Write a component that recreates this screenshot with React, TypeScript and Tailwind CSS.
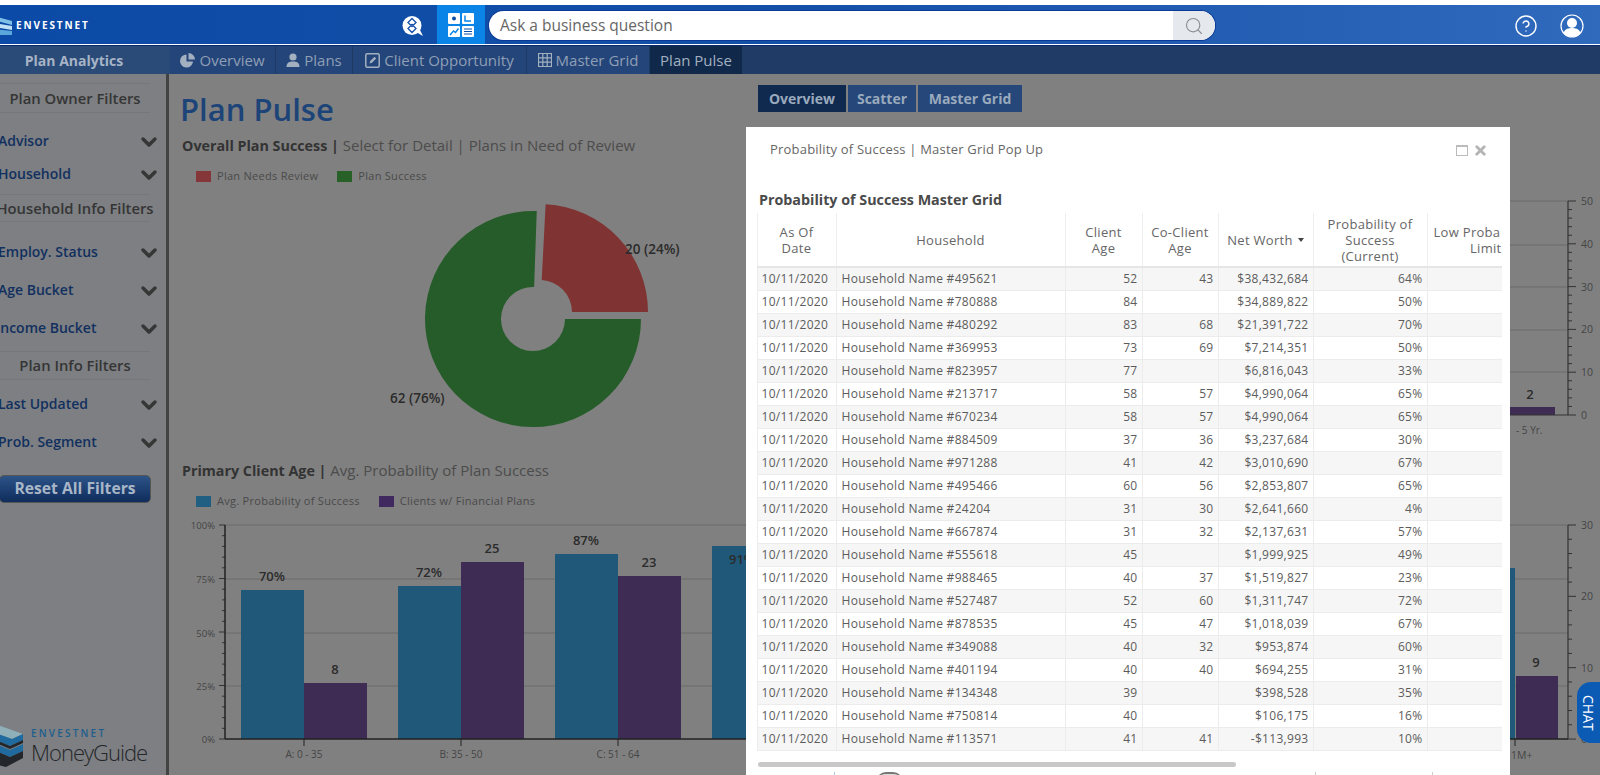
import { ChevronDown, CircleHelp, Search, X } from "lucide-react";

const rows = [
  ["495621", "52", "43", "$38,432,684", "64%"],
  ["780888", "84", "", "$34,889,822", "50%"],
  ["480292", "83", "68", "$21,391,722", "70%"],
  ["369953", "73", "69", "$7,214,351", "50%"],
  ["823957", "77", "", "$6,816,043", "33%"],
  ["213717", "58", "57", "$4,990,064", "65%"],
  ["670234", "58", "57", "$4,990,064", "65%"],
  ["884509", "37", "36", "$3,237,684", "30%"],
  ["971288", "41", "42", "$3,010,690", "67%"],
  ["495466", "60", "56", "$2,853,807", "65%"],
  ["24204", "31", "30", "$2,641,660", "4%"],
  ["667874", "31", "32", "$2,137,631", "57%"],
  ["555618", "45", "", "$1,999,925", "49%"],
  ["988465", "40", "37", "$1,519,827", "23%"],
  ["527487", "52", "60", "$1,311,747", "72%"],
  ["878535", "45", "47", "$1,018,039", "67%"],
  ["349088", "40", "32", "$953,874", "60%"],
  ["401194", "40", "40", "$694,255", "31%"],
  ["134348", "39", "", "$398,528", "35%"],
  ["750814", "40", "", "$106,175", "16%"],
  ["113571", "41", "41", "-$113,993", "10%"],
];

const gridCols = "grid grid-cols-[80px_229px_77px_76px_95px_114px_74px]";

function polar(cx: number, cy: number, r: number, deg: number) {
  const a = ((deg - 90) * Math.PI) / 180;
  return `${cx + r * Math.cos(a)} ${cy + r * Math.sin(a)}`;
}

function slice(cx: number, cy: number, r0: number, r1: number, from: number, to: number) {
  const large = to - from > 180 ? 1 : 0;
  return `M${polar(cx, cy, r1, from)} A${r1} ${r1} 0 ${large} 1 ${polar(cx, cy, r1, to)} L${polar(cx, cy, r0, to)} A${r0} ${r0} 0 ${large} 0 ${polar(cx, cy, r0, from)} Z`;
}

function FilterHeading({ label, h }: { label: string; h: string }) {
  return (
    <div className={`${h} mr-[16px] flex items-center justify-center whitespace-nowrap border-y border-[#75777a] text-[14.8px] font-semibold text-[#353535]`}>
      {label}
    </div>
  );
}

function FilterRow({ label, h, inset }: { label: string; h: string; inset: string }) {
  return (
    <div className={`${h} flex items-center justify-between pr-[5px] text-[14px] font-semibold text-[#12305f]`}>
      <span className={inset}>{label}</span>
      <ChevronDown size={24} strokeWidth={3.5} className="mt-[3px] text-[#363636]" />
    </div>
  );
}

function Legend({ items }: { items: [string, string][] }) {
  return (
    <div className="flex gap-[19px] pl-[27px] text-[11px] tracking-[0.28px] text-[#4a4a4a]">
      {items.map(([label, color]) => (
        <div key={label} className="flex items-center gap-[6px]">
          <span className="h-[11px] w-[15px]" style={{ background: color }} />
          {label}
        </div>
      ))}
    </div>
  );
}

function SectionTitle({ bold, rest, mt }: { bold: string; rest: string; mt: string }) {
  return (
    <p className={`${mt} h-[20px] pl-[13px] text-[15px] leading-[20px] text-[#4c4c4c]`}>
      <span className="text-[14.3px] font-bold text-[#333]">{bold}</span> {rest}
    </p>
  );
}

function NavTab({ label, icon, active, w }: { label: string; icon?: React.ReactNode; active?: boolean; w: string }) {
  return (
    <div className={`${w} flex items-center justify-center gap-[4px] border-r border-[#1d3a63] text-[15px] ${active ? "bg-[#10294b] text-[#a3b0c0]" : "bg-[#24457a] text-[#8f9fb4]"}`}>
      {icon}
      {label}
    </div>
  );
}

function AgeChart() {
  const ticks = Array.from({ length: 21 }, (_, i) => 525 + i * 10.7);
  const groups = [
    { x: 241, a: 590, b: 683, al: "70%", bl: "8", name: "A: 0 - 35" },
    { x: 398, a: 586, b: 562, al: "72%", bl: "25", name: "B: 35 - 50" },
    { x: 555, a: 554, b: 576, al: "87%", bl: "23", name: "C: 51 - 64" },
  ];
  return (
    <svg viewBox="169 510 589 265" width={589} height={265} className="block">
      {[525, 579, 633, 686].map((y) => (
        <line key={y} x1={225} x2={758} y1={y} y2={y} stroke="#6a6a6a" />
      ))}
      {ticks.map((y, i) => (
        <line key={y} x1={i % 5 === 0 ? 219 : 222} x2={225} y1={y} y2={y} stroke="#333" />
      ))}
      <line x1={225} x2={225} y1={525} y2={739} stroke="#222" strokeWidth={1.5} />
      {[
        ["100%", 529],
        ["75%", 583],
        ["50%", 637],
        ["25%", 690],
        ["0%", 743],
      ].map(([t, y]) => (
        <text key={t} x={215} y={y} textAnchor="end" fontSize={9.5} fill="#454545">{t}</text>
      ))}
      {groups.map((g) => (
        <g key={g.name}>
          <rect x={g.x} y={g.a} width={63} height={739 - g.a} fill="#1f5878" />
          <rect x={g.x + 63} y={g.b} width={63} height={739 - g.b} fill="#3f2c54" />
          <text x={g.x + 31} y={g.a - 9} textAnchor="middle" fontSize={13} fontWeight={600} fill="#2b2b2b">{g.al}</text>
          <text x={g.x + 94} y={g.b - 9} textAnchor="middle" fontSize={13} fontWeight={600} fill="#2b2b2b">{g.bl}</text>
          <line x1={g.x + 63} x2={g.x + 63} y1={739} y2={746} stroke="#222" />
          <text x={g.x + 63} y={758} textAnchor="middle" fontSize={10} fill="#454545">{g.name}</text>
        </g>
      ))}
      <rect x={712} y={546} width={46} height={193} fill="#1f5878" />
      <text x={729} y={564} fontSize={13} fontWeight={600} fill="#2b2b2b">91%</text>
      <line x1={225} x2={758} y1={739} y2={739} stroke="#222" strokeWidth={1.5} />
    </svg>
  );
}

function RightAxis({ vals, top, step, minor }: { vals: number[]; top: number; step: number; minor: number }) {
  const n = (vals.length - 1) * 5;
  return (
    <g>
      <line x1={1568} x2={1568} y1={top} y2={top + step * (vals.length - 1)} stroke="#333" strokeWidth={1.2} />
      {Array.from({ length: n + 1 }, (_, i) => (
        <line key={i} x1={1568} x2={i % 5 === 0 ? 1576 : 1572} y1={top + i * minor} y2={top + i * minor} stroke="#333" />
      ))}
      {vals.map((v, i) => (
        <text key={v} x={1581} y={top + i * step + 4} fontSize={10.5} fill="#454545">{v}</text>
      ))}
    </g>
  );
}

function ModalPopup() {
  return (
    <div className="absolute left-[746px] top-[127px] h-[660px] w-[764px] bg-white">
      <div className="flex h-[44px] items-center justify-between pl-[24px] pr-[22px] pt-[2px] text-[13px] tracking-[0.2px] text-[#666]">
        Probability of Success | Master Grid Pop Up
        <div className="flex items-center gap-[5px]">
          <span className="h-[11px] w-[12px] border border-t-2 border-[#bbb]" />
          <X size={15} strokeWidth={4.5} className="text-[#b4b4b4]" />
        </div>
      </div>
      <div className="mt-[19px] pl-[13px] text-[14.3px] font-bold leading-[20px] text-[#4a4a4a]">Probability of Success Master Grid</div>
      <div className="ml-[10.5px] mt-[3px] w-[745px] overflow-hidden text-[12px] tracking-[0.3px] text-[#5c5c5c]">
        <div className={`${gridCols} h-[55px] border-b-2 border-[#e6e6e6] text-center text-[13px] leading-[16px] text-[#666]`}>
          <div className="flex items-center justify-center border-x border-[#eee] px-[14px]">As Of Date</div>
          <div className="flex items-center justify-center border-r border-[#eee]">Household</div>
          <div className="flex items-center justify-center border-r border-[#eee] px-[12px]">Client Age</div>
          <div className="flex items-center justify-center border-r border-[#eee]">Co-Client Age</div>
          <div className="flex items-center justify-center gap-[5px] whitespace-nowrap border-r border-[#eee]">
            Net Worth
            <span className="border-x-[3px] border-t-[4px] border-x-transparent border-t-[#444]" />
          </div>
          <div className="flex items-center justify-center border-r border-[#eee] px-[4px]">Probability of Success (Current)</div>
          <div className="overflow-hidden whitespace-nowrap pl-[6px] pt-[11px]">
            <div className="w-[100px] text-left">Low Proba</div>
            <div className="w-[68px] text-right">Limit</div>
          </div>
        </div>
        {rows.map((r, i) => (
          <div key={r[0]} className={`${gridCols} h-[23px] items-stretch border-b border-[#ececec] leading-[22px] ${i % 2 === 0 ? "bg-[#f6f6f6]" : "bg-white"}`}>
            <div className="border-x border-[#ececec] pl-[4px]">10/11/2020</div>
            <div className="border-r border-[#ececec] pl-[5px]">Household Name #{r[0]}</div>
            <div className="border-r border-[#ececec] pr-[4px] text-right">{r[1]}</div>
            <div className="border-r border-[#ececec] pr-[4px] text-right">{r[2]}</div>
            <div className="border-r border-[#ececec] pr-[4px] text-right">{r[3]}</div>
            <div className="border-r border-[#ececec] pr-[4px] text-right">{r[4]}</div>
            <div />
          </div>
        ))}
      </div>
      <div className="ml-[12px] mt-[11px] h-[5px] w-[478px] rounded-full bg-[#c8c8c8]" />
      <div className="mt-[5px] flex items-start">
        <span className="ml-[88px] h-[4px] w-[1px] bg-[#a9cbe4]" />
        <span className="ml-[41px] h-[10px] w-[27px] rounded-t-full border-t-2 border-[#777] bg-[#ddd]" />
        <span className="ml-[412px] h-[4px] w-[1px] bg-[#ccc]" />
        <span className="ml-[116px] h-[4px] w-[1px] bg-[#ccc]" />
      </div>
    </div>
  );
}

export default function App() {
  const cx = 533;
  const cy = 319;
  return (
    <div className="relative h-[775px] w-[1600px] overflow-hidden bg-[#808080] font-['Open_Sans',sans-serif]">
      <div className="h-[5px] bg-white" />

      <header className="flex h-[39px] items-center bg-gradient-to-r from-[#0b4aa6] via-[#1450a8] to-[#306abd] text-white">
        <div className="mt-[2px] flex w-[402px] items-center gap-[1px]">
          <svg width={15} height={24} viewBox="0 0 15 24" className="shrink-0">
            <path d="M-6 2 L12 7 V11 L-6 6 Z" fill="#7fc0e8" />
            <path d="M-6 9 L12 12 V16 L-6 13 Z" fill="#bfe0f5" />
            <path d="M-6 15 L12 17 V21 L-6 21 Z" fill="#5aa7dc" />
          </svg>
          <span className="text-[10px] font-bold tracking-[1.9px]">ENVESTNET</span>
        </div>
        <svg width={21} height={20} viewBox="0 0 21 20" className="mt-[2px] shrink-0">
          <circle cx={10} cy={9.5} r={9.5} fill="white" />
          <path d="M14 16 L21 20 L17 12 Z" fill="white" />
          <path d="M10 2.5 L14 6.5 L10 10.5 L6 6.5 Z M10 8.5 L14 12.5 L10 16.5 L6 12.5 Z" fill="none" stroke="#1450a8" strokeWidth={1.3} />
        </svg>
        <div className="ml-[14px] flex h-full w-[48px] shrink-0 items-center justify-center bg-[#0a84e6]">
          <svg width={26} height={24} viewBox="0 0 26 24">
            <rect width={12} height={11} rx={1} fill="white" />
            <rect x={14} width={12} height={11} rx={1} fill="white" />
            <rect y={13} width={12} height={11} rx={1} fill="white" />
            <rect x={14} y={13} width={12} height={11} rx={1} fill="white" />
            <circle cx={6} cy={5.5} r={2} fill="#0a4fa6" />
            <path d="M17 2.5 V8 H23" fill="none" stroke="#0a84e6" strokeWidth={1.5} />
            <path d="M2 22 L5.5 18 L7.5 19.5 L10.5 15.5" fill="none" stroke="#0a84e6" strokeWidth={1.4} />
            <path d="M16 16 H24 M16 18.5 H24 M16 21 H24" stroke="#0a4fa6" strokeWidth={1.2} />
          </svg>
        </div>
        <div className="ml-[4px] mt-[2px] flex h-[29px] w-[726px] shrink-0 items-center overflow-hidden rounded-full bg-white shadow-[0_0_0_1px_#0a3a96]">
          <span className="flex-1 pl-[11px] text-[15.5px] text-[#666]">Ask a business question</span>
          <div className="flex h-full w-[42px] items-center justify-center bg-[#e5e8ec]">
            <Search size={20} strokeWidth={1.4} className="text-[#8a8f96]" />
          </div>
        </div>
        <div className="ml-auto mt-[2px] flex items-center gap-[22px] pr-[16px]">
          <CircleHelp size={24} strokeWidth={1.4} />
          <svg width={24} height={24} viewBox="0 0 24 24">
            <circle cx={12} cy={12} r={11} fill="none" stroke="white" strokeWidth={1.2} />
            <circle cx={12} cy={9} r={5} fill="white" />
            <path d="M3.5 19 C5 14.5 9 14 12 14 C15 14 19 14.5 20.5 19 C18 22 15 23 12 23 C9 23 6 22 3.5 19 Z" fill="white" />
          </svg>
        </div>
      </header>

      <div className="h-[1px] bg-white" />
      <div className="h-[1px] bg-[#0a2a70]" />

      <nav className="flex h-[28px] bg-[#203c66]">
        <div className="flex w-[170px] items-center justify-center bg-[#2a4a78] pr-[22px] text-[14px] font-bold text-[#a6b4c6]">Plan Analytics</div>
        <NavTab
          w="w-[106px]"
          label="Overview"
          icon={
            <svg width={15} height={15} viewBox="0 0 15 15">
              <path d="M6.5 1.5 A6.5 6.5 0 1 0 13 8.5 H6.5 Z" fill="#a3b0c0" />
              <path d="M8.5 0 A6.5 6.5 0 0 1 15 6.5 H8.5 Z" fill="#a3b0c0" />
            </svg>
          }
        />
        <NavTab
          w="w-[77px]"
          label="Plans"
          icon={
            <svg width={14} height={14} viewBox="0 0 14 14">
              <circle cx={7} cy={4} r={3.6} fill="#a3b0c0" />
              <path d="M0.5 14 C0.5 9.5 3.5 8.5 7 8.5 C10.5 8.5 13.5 9.5 13.5 14 Z" fill="#a3b0c0" />
            </svg>
          }
        />
        <NavTab
          w="w-[174px]"
          label="Client Opportunity"
          icon={
            <svg width={15} height={15} viewBox="0 0 15 15">
              <rect x={0.8} y={0.8} width={13.4} height={13.4} rx={1.5} fill="none" stroke="#a3b0c0" strokeWidth={1.5} />
              <path d="M4.5 10.5 L5.2 8 L9.5 3.8 L11.2 5.5 L7 9.8 Z" fill="#a3b0c0" />
            </svg>
          }
        />
        <NavTab
          w="w-[123px]"
          label="Master Grid"
          icon={
            <svg width={14} height={14} viewBox="0 0 14 14">
              <path d="M0.5 0.5 H13.5 V13.5 H0.5 Z M0.5 4.8 H13.5 M0.5 9.2 H13.5 M4.8 0.5 V13.5 M9.2 0.5 V13.5" fill="none" stroke="#a3b0c0" strokeWidth={1.2} />
            </svg>
          }
        />
        <NavTab w="w-[93px]" label="Plan Pulse" active />
      </nav>

      <main className="flex h-[701px]">
        <aside className="flex w-[169px] shrink-0 flex-col overflow-hidden border-r-[3px] border-[#434343] bg-[#7d7f82] pt-[9px]">
          <FilterHeading label="Plan Owner Filters" h="h-[30px]" />
          <div className="h-[11px]" />
          <FilterRow label="Advisor" h="h-[33px]" inset="-ml-[2px]" />
          <FilterRow label="Household" h="h-[33px]" inset="-ml-[2px]" />
          <div className="h-[4px]" />
          <FilterHeading label="Household Info Filters" h="h-[28px]" />
          <div className="h-[10px]" />
          <FilterRow label="Employ. Status" h="h-[38px]" inset="-ml-[2px]" />
          <FilterRow label="Age Bucket" h="h-[38px]" inset="-ml-[2px]" />
          <FilterRow label="Income Bucket" h="h-[38px]" inset="-ml-[4px]" />
          <div className="h-[5px]" />
          <FilterHeading label="Plan Info Filters" h="h-[29px]" />
          <div className="h-[4px]" />
          <FilterRow label="Last Updated" h="h-[38px]" inset="-ml-[2px]" />
          <FilterRow label="Prob. Segment" h="h-[38px]" inset="-ml-[2px]" />
          <div className="-ml-[1px] mr-[15px] mt-[15px] flex h-[28px] items-center justify-center rounded-[5px] border border-[#555] bg-gradient-to-b from-[#2d5488] to-[#0f2c5c] text-[15.7px] font-bold text-[#a8b6c8]">
            Reset All Filters
          </div>
          <div className="mt-auto flex items-center gap-[8px] pb-[8px]">
            <svg width={23} height={42} viewBox="0 0 23 42" className="shrink-0">
              <path d="M-2 0 L23 9 L12 14 L-2 9 Z" fill="#8fb0b8" />
              <path d="M-2 9 L12 14 L23 9 V15 L10 21 L-2 16 Z" fill="#1f6a9e" />
              <path d="M-2 16 L10 21 L23 15 V18 L10 24 L-2 19 Z" fill="#23262b" />
              <path d="M-2 20 L10 25 L23 19 V26 L10 32 L-2 27 Z" fill="#1f6a9e" />
              <path d="M-2 27 L10 32 L23 26 V33 L6 42 L-2 40 Z" fill="#23262b" />
            </svg>
            <div>
              <div className="text-[10px] font-semibold leading-[11px] tracking-[2.2px] text-[#1c5e8e]">ENVESTNET</div>
              <div className="text-[22px] font-light leading-[26px] tracking-[-1px] text-[#24262a]">MoneyGuide</div>
            </div>
          </div>
        </aside>

        <section className="w-[589px] shrink-0 overflow-hidden">
          <h1 className="h-[55px] pl-[11px] pt-[15px] text-[31px] font-semibold leading-[40px] text-[#1c4478]">Plan Pulse</h1>
          <SectionTitle mt="mt-[6px]" bold="Overall Plan Success |" rest="Select for Detail | Plans in Need of Review" />
          <div className="mt-[13px] h-[12px]">
            <Legend items={[["Plan Needs Review", "#843638"], ["Plan Success", "#276128"]]} />
          </div>
          <svg viewBox="169 190 589 263" width={589} height={263} className="mt-[10px] block">
            <path d={slice(cx, cy, 32, 108, 90, 362)} fill="#265c29" />
            <path d={slice(cx + 7, cy - 7, 32, 108, 3, 90)} fill="#7f3333" />
            <text x={625} y={254} fontSize={13.5} fontWeight={600} fill="#2b2b2b">20 (24%)</text>
            <text x={390} y={403} fontSize={13.5} fontWeight={600} fill="#2b2b2b">62 (76%)</text>
          </svg>
          <SectionTitle mt="mt-[7px]" bold="Primary Client Age |" rest="Avg. Probability of Plan Success" />
          <div className="mt-[13px] h-[12px]">
            <Legend items={[["Avg. Probability of Success", "#215f82"], ["Clients w/ Financial Plans", "#40295f"]]} />
          </div>
          <div className="mt-[5px]">
            <AgeChart />
          </div>
        </section>

        <section className="w-[842px] shrink-0">
          <div className="flex gap-[2px] pt-[11px] text-[14px] font-bold text-[#9aaabd]">
            <div className="flex h-[27px] w-[88px] items-center justify-center bg-[#10294f]">Overview</div>
            <div className="flex h-[27px] w-[68px] items-center justify-center bg-[#25477a]">Scatter</div>
            <div className="flex h-[27px] w-[104px] items-center justify-center bg-[#25477a]">Master Grid</div>
          </div>
          <svg viewBox="758 190 842 250" width={842} height={250} className="mt-[78px] block">
            {[201, 245, 287, 330, 372].map((y) => (
              <line key={y} x1={1510} x2={1568} y1={y} y2={y} stroke="#6a6a6a" />
            ))}
            <RightAxis vals={[50, 40, 30, 20, 10, 0]} top={201} step={42.8} minor={8.56} />
            <rect x={1510} y={407} width={45} height={8} fill="#3f2c54" />
            <line x1={1510} x2={1568} y1={415} y2={415} stroke="#333" />
            <text x={1530} y={399} fontSize={13} fontWeight={600} textAnchor="middle" fill="#2b2b2b">2</text>
            <text x={1516} y={434} fontSize={10} fill="#454545">- 5 Yr.</text>
          </svg>
          <svg viewBox="758 510 842 265" width={842} height={265} className="mt-[70px] block">
            {[525, 579, 633, 686].map((y) => (
              <line key={y} x1={1510} x2={1568} y1={y} y2={y} stroke="#6a6a6a" />
            ))}
            <RightAxis vals={[30, 20, 10, 0]} top={525} step={71.3} minor={14.27} />
            <rect x={1510} y={568} width={5} height={171} fill="#1f5878" />
            <rect x={1516} y={676} width={42} height={63} fill="#3f2c54" />
            <line x1={1510} x2={1568} y1={739} y2={739} stroke="#222" strokeWidth={1.5} />
            <line x1={1515} x2={1515} y1={739} y2={746} stroke="#222" />
            <text x={1511} y={759} fontSize={10.5} fill="#454545">1M+</text>
            <text x={1536} y={667} fontSize={13} fontWeight={600} textAnchor="middle" fill="#2b2b2b">9</text>
          </svg>
        </section>
      </main>

      <ModalPopup />

      <div className="absolute right-0 top-[682px] flex h-[61px] w-[23px] items-center justify-center rounded-l-[14px] bg-[#0b5bb5] text-[14px] text-white [writing-mode:vertical-rl]">
        CHAT
      </div>
    </div>
  );
}
